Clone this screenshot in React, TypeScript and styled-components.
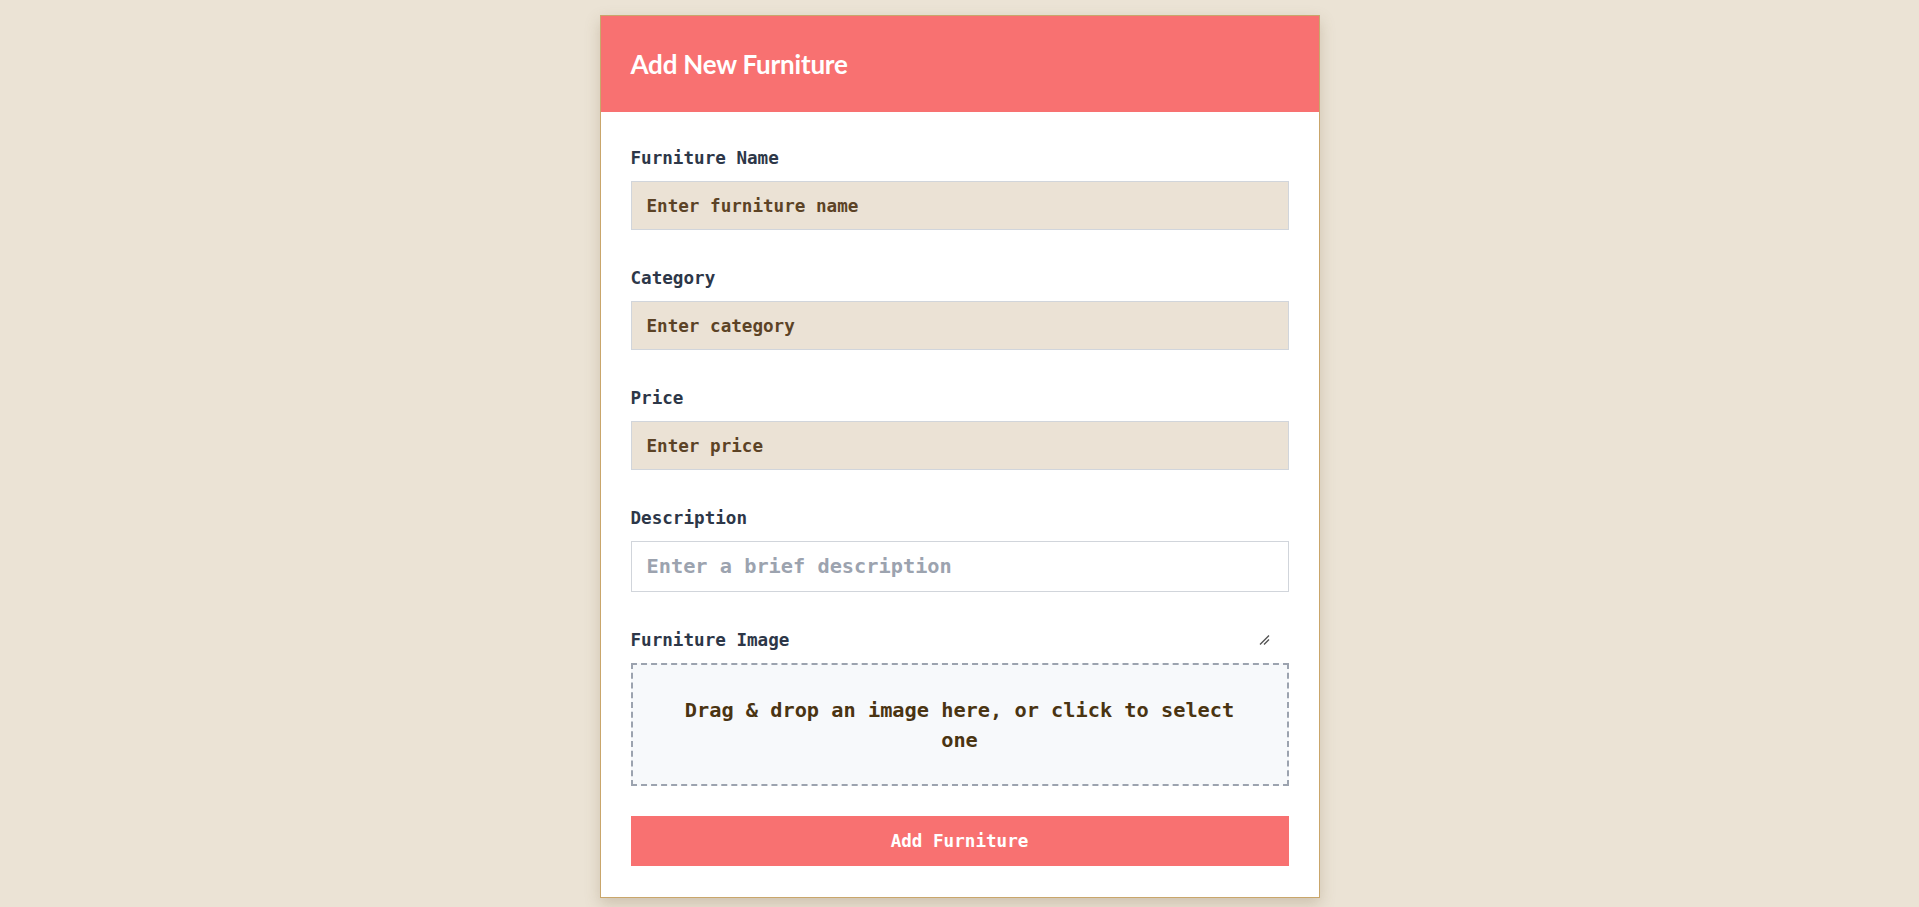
import styled, { createGlobalStyle } from "styled-components";

const Global = createGlobalStyle`
  body {
    margin: 0;
    background-color: #ebe3d5;
    font-family: "DejaVu Sans Mono", "Liberation Mono", monospace;
  }
`;

const Page = styled.div`
  display: flex;
  justify-content: center;
  padding: 15px 0 10px;
`;

const Card = styled.div`
  width: 720px;
  box-sizing: border-box;
  background-color: #ffffff;
  border: 1px solid #c9a66b;
  box-shadow: 0 6px 14px rgba(120, 95, 60, 0.25);
`;

const Header = styled.div`
  height: 96px;
  display: flex;
  align-items: center;
  padding: 0 30px;
  background-color: #f87171;
`;

const Title = styled.h2`
  margin: 0;
  color: #ffffff;
  font-family: "Lato", "Noto Sans", sans-serif;
  font-weight: 700;
  font-size: 26px;
  letter-spacing: -0.2px;
`;

const Form = styled.form`
  display: flex;
  flex-direction: column;
  padding: 33px 30px 31px;
`;

const Field = styled.div`
  display: flex;
  flex-direction: column;
  margin-bottom: 35px;

  &:last-of-type {
    margin-bottom: 30px;
  }
`;

const LabelRow = styled.div`
  display: flex;
  justify-content: space-between;
  align-items: center;
  padding-right: 18px;
  margin-bottom: 10px;
`;

const Label = styled.label`
  color: #2d3748;
  font-weight: 700;
  font-size: 17.6px;
  line-height: 26px;
`;

const Input = styled.input`
  height: 49px;
  box-sizing: border-box;
  padding: 0 15px;
  border: 1px solid #d1d5db;
  background-color: #ebe2d5;
  font-family: inherit;
  font-weight: 700;
  font-size: 17.6px;
  color: #5c4326;
  outline: none;

  &::placeholder {
    color: #5c4326;
    opacity: 1;
  }
`;

const TextArea = styled.textarea`
  height: 51px;
  box-sizing: border-box;
  padding: 12px 15px;
  border: 1px solid #d1d5db;
  background-color: #ffffff;
  font-family: inherit;
  font-weight: 700;
  font-size: 20.3px;
  line-height: 24px;
  color: #374151;
  resize: none;
  outline: none;
  overflow: hidden;

  &::placeholder {
    color: #9ca3af;
    opacity: 1;
  }
`;

const DropZone = styled.div`
  box-sizing: border-box;
  height: 123px;
  padding: 0 40px;
  display: flex;
  align-items: center;
  justify-content: center;
  text-align: center;
  border: 2px dashed #9ca3af;
  background-color: #f7f9fb;
  color: #4a3412;
  font-weight: 700;
  font-size: 20.3px;
  line-height: 30px;
  cursor: pointer;
`;

const Button = styled.button`
  height: 50px;
  border: none;
  background-color: #f87171;
  color: #ffffff;
  font-family: inherit;
  font-weight: 700;
  font-size: 17.6px;
  cursor: pointer;
`;

const Grip = () => (
  <svg width="12" height="12" viewBox="0 0 12 12">
    <path d="M1 10.5 L10 1.5 M5 10.5 L10 5.5" stroke="#555" strokeWidth="1.4" fill="none" />
  </svg>
);

const App = () => {
  return (
    <Page>
      <Global />
      <Card>
        <Header>
          <Title>Add New Furniture</Title>
        </Header>
        <Form onSubmit={(e) => e.preventDefault()}>
          <Field>
            <LabelRow>
              <Label>Furniture Name</Label>
            </LabelRow>
            <Input placeholder="Enter furniture name" />
          </Field>
          <Field>
            <LabelRow>
              <Label>Category</Label>
            </LabelRow>
            <Input placeholder="Enter category" />
          </Field>
          <Field>
            <LabelRow>
              <Label>Price</Label>
            </LabelRow>
            <Input placeholder="Enter price" />
          </Field>
          <Field>
            <LabelRow>
              <Label>Description</Label>
            </LabelRow>
            <TextArea placeholder="Enter a brief description" />
          </Field>
          <Field>
            <LabelRow>
              <Label>Furniture Image</Label>
              <Grip />
            </LabelRow>
            <DropZone>Drag &amp; drop an image here, or click to select one</DropZone>
          </Field>
          <Button type="submit">Add Furniture</Button>
        </Form>
      </Card>
    </Page>
  );
};

export default App;
